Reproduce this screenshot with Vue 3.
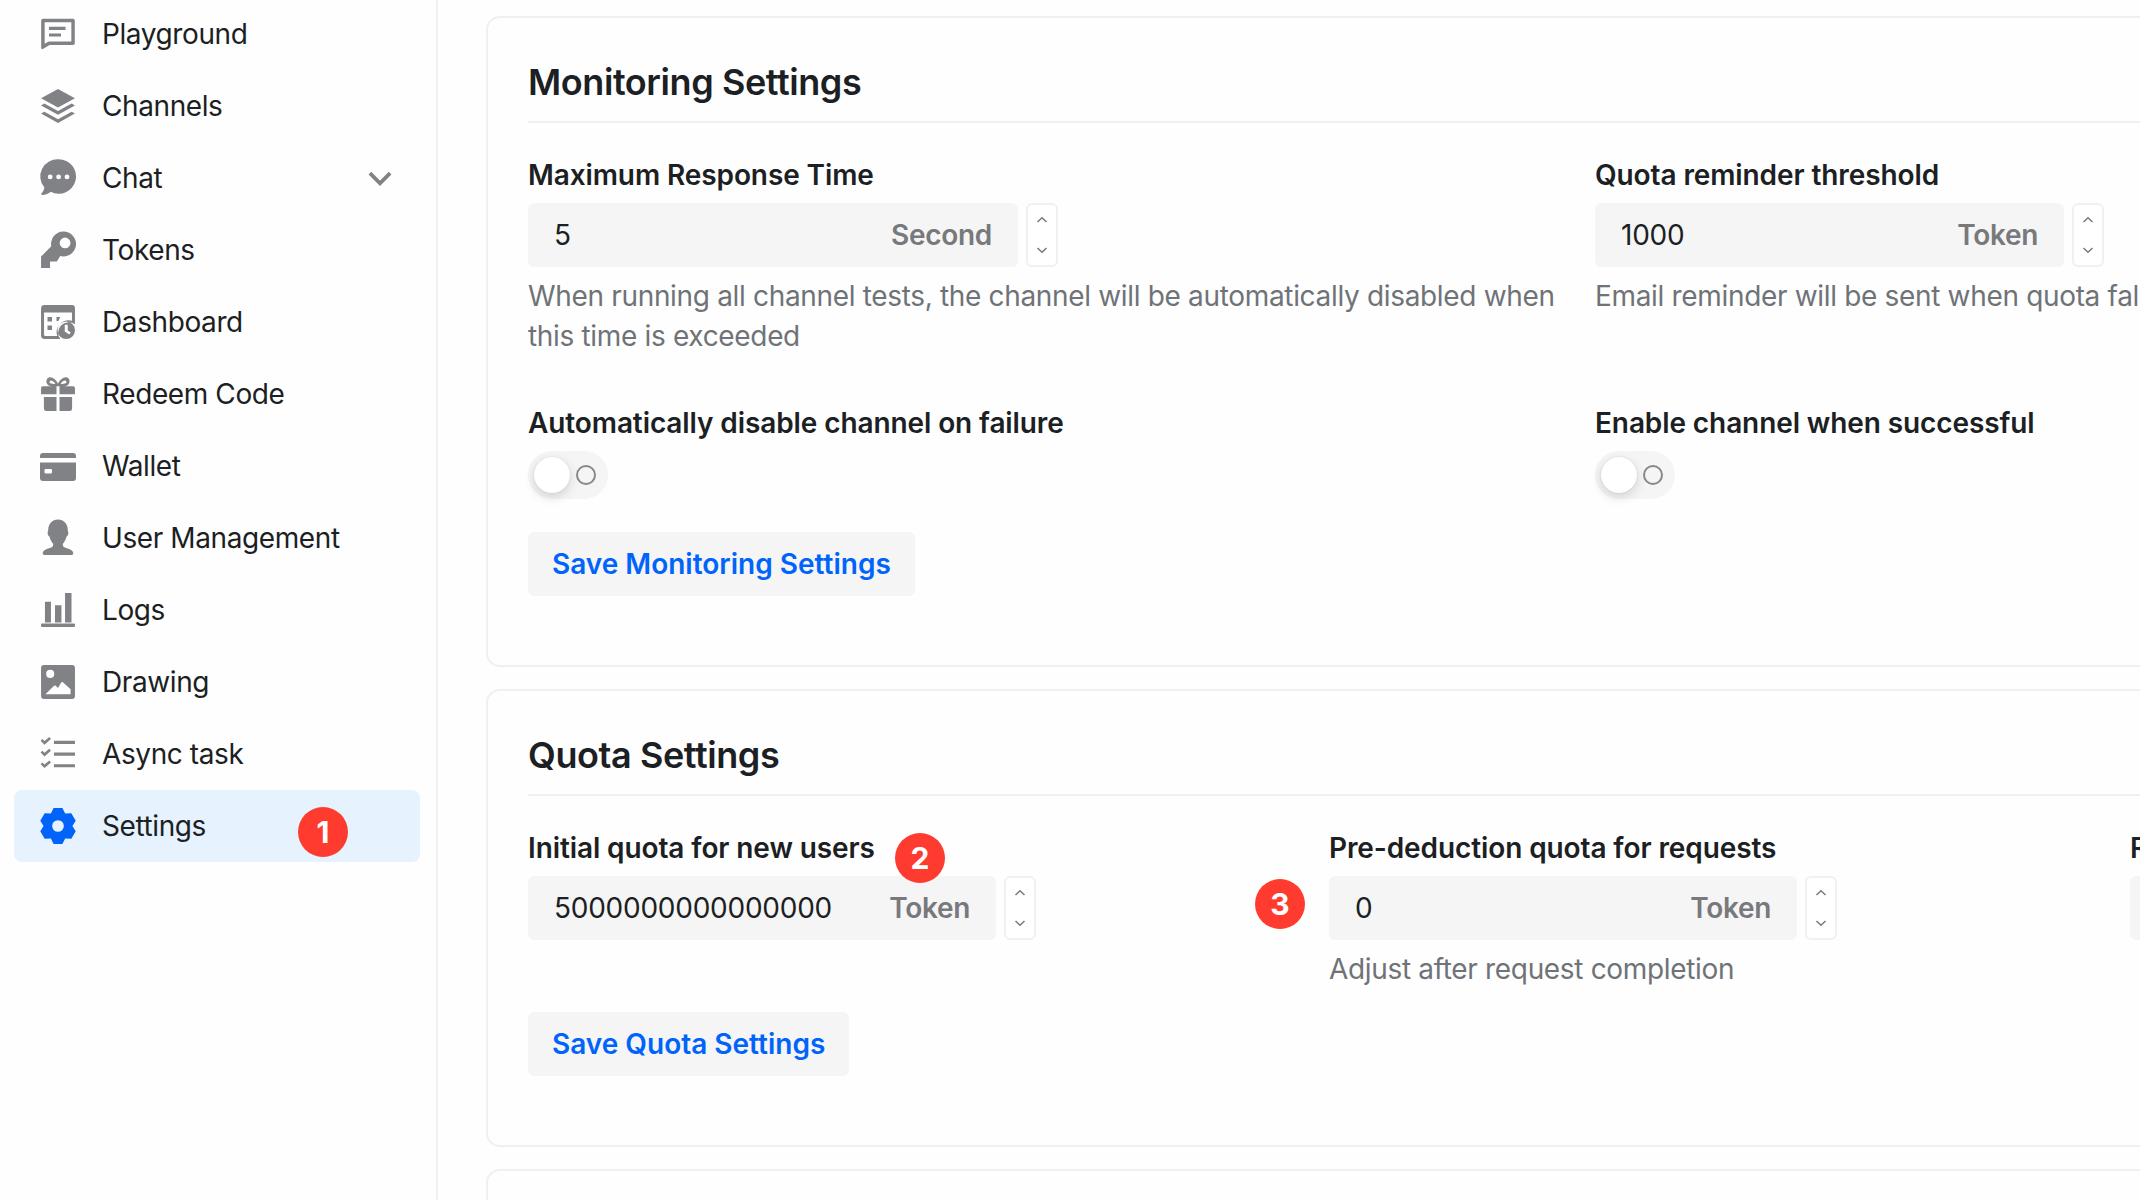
<script setup>
const ring = (cx, cy, r) =>
  `M${cx - r} ${cy}a${r} ${r} 0 1 0 ${2 * r} 0a${r} ${r} 0 1 0 ${-2 * r} 0z`

const gearPath = () => {
  let d = ''
  const pts = []
  for (let i = 0; i < 6; i++) {
    const a = (Math.PI / 3) * i - Math.PI / 2
    const p = (r, o) => [
      (12 + r * Math.cos(a + o)).toFixed(2),
      (12 + r * Math.sin(a + o)).toFixed(2)
    ]
    pts.push(p(9.6, -0.52), p(12.3, -0.24), p(12.3, 0.24), p(9.6, 0.52))
  }
  d = 'M' + pts.map((p) => p.join(' ')).join('L') + 'z'
  return d + ring(12, 12, 3.9)
}

const items = [
  { label: 'Playground', d: 'M2 1.900h20a1.200 1.200 0 0 1 1.200 1.200v15a1.200 1.200 0 0 1-1.200 1.200H6.400l-4.200 2.500a.8.8 0 0 1-1.400-.6V3.100a1.200 1.200 0 0 1 1.200-1.200zM3.100 4.200v14.300l2.700-1.500H20.900V4.200zM6 7.200h11v2.100H6zM6 11.600h8v2.100H6z' },
  { label: 'Channels', d: 'M12 .7 23.300 6.800 12 13 .7 6.800zM.7 11.600 2.900 10.400 12 15.400 21.100 10.400 23.300 11.600 12 17.800zM.7 17 2.900 15.800 12 20.800 21.100 15.800 23.300 17 12 23.300z' },
  { label: 'Chat', chevron: true, d: 'M12.500-.5A11.500 11.500 0 1 1 7.200 21.200C5.800 22.500 3.600 23.300 1.600 23.300.9 23.300.7 22.700 1.100 22.200 2 21.200 2.700 20 2.900 18.400A11.500 11.500 0 0 1 12.500-.5z' + ring(6.8, 11.3, 1.6) + ring(12.4, 11.3, 1.6) + ring(18, 11.3, 1.6) },
  { label: 'Tokens', d: 'M15.500-.3A8.300 8.300 0 1 1 13.500 16L11.200 19.600H6.700V24H.7V16.400L7.500 9.500A8.300 8.300 0 0 1 15.500-.3z' + ring(16.700, 7.300, 3.600) },
  { label: 'Dashboard', d: 'M3 .7h18.300a2 2 0 0 1 2 2V13.500A7 7 0 0 0 13.500 23.300H3a2.300 2.300 0 0 1-2.300-2.300V3A2.300 2.300 0 0 1 3 .7zM2.700 5.700V20.300a1 1 0 0 0 1 1H11.500A8 8 0 0 1 21.300 11.200V5.700zM5 8.700h3v3H5zM5 14.300h3v3H5zM11 8.700h2.500l-1.200 2.600H11z' + ring(17.500, 17.500, 5.800) + 'M16.500 13.800v4.600l3 2 1-1.500-2-1.300v-3.800z' },
  { label: 'Redeem Code', d: 'M1.900 6.900H11V12.100H.7V8.100A1.200 1.200 0 0 1 1.900 6.900zM13 6.900h9.100a1.200 1.200 0 0 1 1.200 1.200V12.100H13zM2.600 14H11V23.300H4A1.400 1.400 0 0 1 2.600 21.900zM13 14h8.400V21.900A1.400 1.400 0 0 1 20 23.300H13zM12 6.900C10.800 6.900 6.400 7.100 5.200 5.800 3.700 4.300 4.100 1.700 5.900 1 8.100.2 10.900 2.600 12 5.200 13.100 2.600 15.900.2 18.100 1 19.900 1.700 20.300 4.300 18.800 5.800 17.600 7.100 13.200 6.900 12 6.900zM7 3.100C6.300 3.300 6.100 4.300 6.800 4.800 7.400 5.200 9.300 5.300 10.200 5.300 9.500 4 8 2.800 7 3.100zM17 3.100C16 2.800 14.500 4 13.800 5.300 14.700 5.300 16.600 5.200 17.200 4.800 17.900 4.300 17.700 3.300 17 3.100z' },
  { label: 'Wallet', d: 'M2 3.300h20a2 2 0 0 1 2 2V6.700H0V5.300a2 2 0 0 1 2-2zM0 9.700h24V20a2 2 0 0 1-2 2H2a2 2 0 0 1-2-2zM3.800 14a.8.8 0 0 0-.8.8v1.400a.8.8 0 0 0 .8.8h3.400a.8.8 0 0 0 .8-.8v-1.400a.8.8 0 0 0-.8-.8z' },
  { label: 'User Management', d: 'M12-.4C15.900-.4 18.500 2.800 18.500 6.400 18.500 7.300 18.900 7.800 18.900 8.800 18.900 10 18.100 10.700 17.600 11.200 17.100 13.500 16 15.100 15.200 15.900 15.200 17.300 15.300 17.900 16.900 18.500 19.800 19.500 22.200 20.200 22.200 22.200 22.200 23 21.500 23.400 20.800 23.400H3.200C2.500 23.400 1.800 23 1.800 22.200 1.800 20.200 4.200 19.500 7.100 18.500 8.700 17.900 8.800 17.300 8.800 15.900 8 15.100 6.900 13.500 6.400 11.200 5.900 10.700 5.100 10 5.100 8.800 5.100 7.800 5.500 7.300 5.500 6.400 5.500 2.800 8.100-.4 12-.4z' },
  { label: 'Logs', d: 'M3.300 6.500h4V20.300h-4zM10 8.900h4.300V20.300H10zM16.700.7H21V20.300H16.700zM1.400 21h21.200a.7.7 0 0 1 .7.7v.9a.7.7 0 0 1-.7.7H1.400a.7.7 0 0 1-.7-.7v-.9a.7.7 0 0 1 .7-.7z' },
  { label: 'Drawing', d: 'M2.700.7h18.600a2 2 0 0 1 2 2v18.600a2 2 0 0 1-2 2H2.700a2 2 0 0 1-2-2V2.700a2 2 0 0 1 2-2z' + ring(6.800, 6.600, 2.700) + 'M3.600 20.200 9 14.800c.5-.5 1.200-.5 1.600-.1L12 16l2-3.500c.3-.5 1-.6 1.400-.2l5 4.600v3.300z' },
  { label: 'Async task', d: 'M9.300 3.200H23.300V5.300H9.300zM9.300 11H23.300V13.100H9.300zM9.300 18.800H23.300V20.900H9.300zM.4 3.200 1.600 2 3 3.400 6.200.7 7.300 2 3 5.800zM.4 11 1.600 9.800 3 11.200 6.200 8.500 7.300 9.800 3 13.600zM.4 18.800 1.600 17.600 3 19 6.200 16.300 7.300 17.600 3 21.400z' },
  { label: 'Settings', active: true, d: gearPath() }
]

const sections = [
  {
    key: 'monitoring',
    title: 'Monitoring Settings',
    button: 'Save Monitoring Settings',
    rows: [
      [
        { label: 'Maximum Response Time', value: '5', unit: 'Second', width: 490, hint: 'When running all channel tests, the channel will be automatically disabled when this time is exceeded' },
        { label: 'Quota reminder threshold', value: '1000', unit: 'Token', width: 469, hint: 'Email reminder will be sent when quota falls below this value' }
      ],
      [
        { label: 'Automatically disable channel on failure', toggle: true },
        { label: 'Enable channel when successful', toggle: true }
      ]
    ]
  },
  {
    key: 'quota',
    title: 'Quota Settings',
    button: 'Save Quota Settings',
    rows: [
      [
        { label: 'Initial quota for new users', value: '5000000000000000', unit: 'Token', width: 468 },
        { label: 'Pre-deduction quota for requests', value: '0', unit: 'Token', width: 468, hint: 'Adjust after request completion' },
        { label: 'Referral reward quota', value: '0', unit: 'Token', width: 468 }
      ]
    ]
  }
]

const badges = [
  { n: 1, cls: 'b1' },
  { n: 2, cls: 'b2' },
  { n: 3, cls: 'b3' }
]
</script>

<template>
  <div class="page">
    <aside class="sidebar">
      <nav class="nav">
        <div v-for="item in items" :key="item.label" class="nav-item" :class="{ active: item.active }">
          <svg class="nav-icon" viewBox="0 0 24 24" aria-hidden="true">
            <path :d="item.d" fill-rule="evenodd" />
          </svg>
          <span class="nav-label">{{ item.label }}</span>
          <svg v-if="item.chevron" class="chevron" viewBox="0 0 24 16" aria-hidden="true">
            <path d="M2.500 3 12 12.500 21.500 3" />
          </svg>
        </div>
      </nav>
    </aside>

    <main class="main">
      <section v-for="s in sections" :key="s.key" class="card" :class="s.key">
        <h2 class="card-title">{{ s.title }}</h2>
        <div v-for="(row, i) in s.rows" :key="i" class="row">
          <div v-for="f in row" :key="f.label" class="field">
            <div class="label">{{ f.label }}</div>
            <div v-if="f.toggle" class="toggle">
              <span class="knob"></span>
              <span class="off"></span>
            </div>
            <div v-else class="number">
              <div class="input" :style="{ width: f.width + 'px' }">
                <span class="value">{{ f.value }}</span>
                <span class="unit">{{ f.unit }}</span>
              </div>
              <div class="spin">
                <svg viewBox="0 0 12 8" aria-hidden="true"><path d="M1.500 6 6 1.800 10.500 6" /></svg>
                <svg viewBox="0 0 12 8" aria-hidden="true"><path d="M1.500 2 6 6.200 10.500 2" /></svg>
              </div>
            </div>
            <div v-if="f.hint" class="hint">{{ f.hint }}</div>
          </div>
        </div>
        <button class="save" type="button">{{ s.button }}</button>
      </section>
      <section class="card empty"></section>
    </main>

    <span v-for="b in badges" :key="b.n" class="badge" :class="b.cls">{{ b.n }}</span>
  </div>
</template>

<style>
html, body { margin: 0; background: #fff; }
</style>

<style scoped>
.page {
  position: relative;
  display: flex;
  width: 2140px;
  height: 1200px;
  overflow: hidden;
  background: #fefefe;
  color: #1c1f23;
  font-family: Inter, "Liberation Sans", sans-serif;
  font-size: 28px;
  line-height: 40px;
}
.sidebar {
  flex: none;
  box-sizing: border-box;
  width: 438px;
  padding: 0 16px 0 14px;
  border-right: 2px solid #f1f1f1;
}
.nav { margin-top: -2px; }
.nav-item {
  display: flex;
  align-items: center;
  gap: 26px;
  height: 72px;
  padding: 0 27px 0 26px;
  border-radius: 8px;
}
.nav-item.active { background: #e6f2fe; }
.nav-icon { flex: none; width: 36px; height: 36px; fill: #808285; overflow: visible; }
.active .nav-icon { fill: #0064fa; }
.nav-label { flex: 1; letter-spacing: -0.4px; }
.chevron {
  flex: none;
  width: 26px;
  height: 17px;
  fill: none;
  stroke: #808285;
  stroke-width: 3.6;
}
.main {
  flex: 1;
  min-width: 0;
  padding: 16px 0 0 48px;
  overflow: hidden;
}
.card {
  box-sizing: border-box;
  width: 2500px;
  padding: 40px 40px 69px;
  margin-bottom: 22px;
  border: 2px solid #f0f0f0;
  border-radius: 14px;
}
.card.empty { height: 100px; }
.card-title {
  margin: 0;
  padding-bottom: 15px;
  border-bottom: 2px solid #f0f0f0;
  font-size: 36px;
  line-height: 48px;
  font-weight: 600;
  letter-spacing: -0.42px;
}
.row {
  display: grid;
  gap: 31px;
  margin-top: 32px;
}
.monitoring .row { grid-template-columns: 1036px 1036px; }
.monitoring .row + .row { margin-top: 47px; }
.quota .row { grid-template-columns: 770px 770px 770px; }
.label {
  margin-bottom: 8px;
  font-weight: 600;
  letter-spacing: -0.1px;
  white-space: nowrap;
}
.number { display: flex; gap: 8px; height: 64px; }
.input {
  box-sizing: border-box;
  display: flex;
  align-items: center;
  justify-content: space-between;
  height: 64px;
  padding: 0 26px;
  border-radius: 6px;
  background: #f5f5f5;
}
.value { letter-spacing: -0.25px; }
.unit { color: #77797c; font-weight: 600; letter-spacing: -0.3px; }
.spin {
  box-sizing: border-box;
  display: flex;
  flex-direction: column;
  align-items: center;
  justify-content: space-between;
  width: 32px;
  padding: 11px 0;
  border: 2px solid #f0f0f0;
  border-radius: 6px;
  background: #fff;
}
.spin svg {
  width: 12px;
  height: 8px;
  fill: none;
  stroke: #77797c;
  stroke-width: 1.500;
}
.hint {
  margin-top: 9px;
  color: #6f7378;
  letter-spacing: -0.33px;
}
.monitoring .field:nth-child(2) .hint { white-space: nowrap; }
.toggle {
  position: relative;
  width: 80px;
  height: 48px;
  border-radius: 24px;
  background: #f5f5f5;
}
.knob {
  position: absolute;
  left: 6px;
  top: 6px;
  width: 36px;
  height: 36px;
  border-radius: 50%;
  background: #fff;
  box-shadow: 0 4px 12px rgba(0, 0, 0, 0.14), 0 0 2px rgba(0, 0, 0, 0.12);
}
.off {
  position: absolute;
  left: 48px;
  top: 14px;
  box-sizing: border-box;
  width: 20px;
  height: 20px;
  border: 2px solid #86888a;
  border-radius: 50%;
}
.save {
  display: block;
  height: 64px;
  margin-top: 33px;
  padding: 0 24px;
  border: 0;
  border-radius: 6px;
  background: #f5f5f5;
  color: #0064fa;
  font: 600 28px/40px Inter, "Liberation Sans", sans-serif;
}
.quota .save { margin-top: 23px; }
.badge {
  position: absolute;
  width: 50px;
  height: 50px;
  border-radius: 50%;
  background: #ff3b30;
  color: #fff;
  font-size: 30px;
  font-weight: 700;
  line-height: 50px;
  text-align: center;
}
.b1 { left: 298px; top: 807px; }
.b2 { left: 895px; top: 833px; }
.b3 { left: 1255px; top: 879px; }
</style>
